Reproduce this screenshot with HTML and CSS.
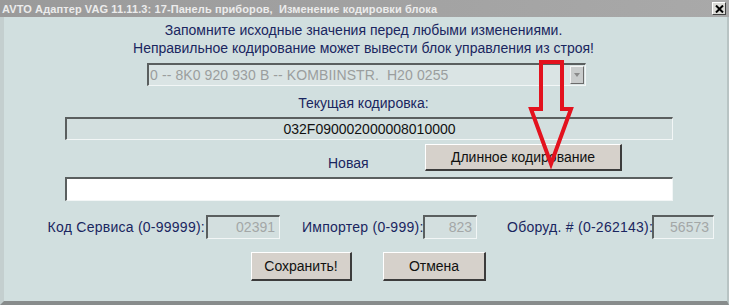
FILE: index.html
```html
<!DOCTYPE html>
<html lang="ru">
<head>
<meta charset="utf-8">
<title>Изменение кодировки блока</title>
<link rel="stylesheet" href="styles.css">
</head>
<body>
<div class="window">
  <div class="titlebar">
    <span class="title">AVTO Адаптер VAG 11.11.3: 17-Панель приборов,&nbsp; Изменение кодировки блока</span>
    <span class="close"><svg width="9" height="8" viewBox="0 0 9 8"><path d="M1 0.5 L8 7.5 M8 0.5 L1 7.5" stroke="#000" stroke-width="2" fill="none"/></svg></span>
  </div>
  <div class="content">
    <div class="msg">Запомните исходные значения перед любыми изменениями.</div>
    <div class="msg">Неправильное кодирование может вывести блок управления из строя!</div>
    <div class="combo">
      <span class="combo-text">0 -- 8K0 920 930 B -- KOMBIINSTR.&nbsp; H20 0255</span>
      <span class="combo-btn"><span class="tri"></span></span>
    </div>
    <div class="caption">Текущая кодировка:</div>
    <div class="field current">032F090002000008010000</div>
    <div class="new-row">
      <span class="new-label">Новая</span>
      <span class="button long">Длинное кодирование</span>
    </div>
    <div class="field new"></div>
    <div class="params">
      <span class="plabel l1">Код Сервиса (0-99999):</span>
      <span class="pinput i1">02391</span>
      <span class="plabel l2">Импортер (0-999):</span>
      <span class="pinput i2">823</span>
      <span class="plabel l3">Оборуд. # (0-262143):</span>
      <span class="pinput i3">56573</span>
    </div>
    <div class="actions">
      <span class="button save">Сохранить!</span>
      <span class="button cancel">Отмена</span>
    </div>
  </div>
  <svg class="arrow" width="729" height="305" viewBox="0 0 729 305">
    <polygon points="541,62 562,62 562,109 571,109 551,164 531,109 541,109" fill="none" stroke="#e3121e" stroke-width="4" stroke-linejoin="miter"/>
  </svg>
</div>
</body>
</html>
```
FILE: styles.css
```css
html, body {
  margin: 0;
  padding: 0;
}
body {
  width: 729px;
  height: 305px;
  overflow: hidden;
  font-family: "Liberation Sans", Arial, sans-serif;
}
.window {
  position: relative;
  width: 729px;
  height: 305px;
  background: #d1dfdf;
  box-sizing: border-box;
  border-left: 4px solid #c4cfcf;
  border-bottom: 4px solid #888c8c;
  border-right: 2px solid #b8c4c4;
}
.titlebar {
  height: 17px;
  margin-left: -4px;
  margin-right: -2px;
  background: linear-gradient(to right, #9a9a9a, #a9a9a9);
  display: flex;
  align-items: center;
  justify-content: space-between;
  padding: 0 3px 0 2px;
}
.title {
  color: #ececec;
  font-weight: bold;
  font-size: 11px;
  letter-spacing: 0.1px;
  white-space: pre;
}
.close {
  width: 14px;
  height: 13px;
  box-sizing: border-box;
  background: #dcdcd8;
  border-top: 1px solid #ffffff;
  border-left: 1px solid #ffffff;
  border-right: 1px solid #404040;
  border-bottom: 1px solid #404040;
  display: flex;
  align-items: center;
  justify-content: center;
}
.content {
  padding-top: 4px;
  color: #1a2660;
  font-size: 14px;
}
.msg {
  text-align: center;
  line-height: 18px;
  margin-left: -4px;
}
.combo {
  margin: 6px 0 0 143px;
  width: 439px;
  height: 23px;
  box-sizing: border-box;
  border-top: 2px solid #5a5f5f;
  border-left: 2px solid #5a5f5f;
  border-bottom: 1px solid #f2f6f6;
  border-right: 1px solid #f2f6f6;
  background: #dae4e4;
  display: flex;
  align-items: center;
  justify-content: space-between;
  padding-right: 1px;
}
.combo-text {
  color: #9a9e9e;
  padding-left: 1px;
  letter-spacing: 0.1px;
  white-space: pre;
}
.combo-btn {
  width: 14px;
  height: 18px;
  box-sizing: border-box;
  background: #c9cccc;
  border-top: 1px solid #f4f4f4;
  border-left: 1px solid #f4f4f4;
  border-right: 1px solid #6b6b6b;
  border-bottom: 1px solid #6b6b6b;
  display: flex;
  align-items: center;
  justify-content: center;
}
.tri {
  width: 0;
  height: 0;
  border-left: 3px solid transparent;
  border-right: 3px solid transparent;
  border-top: 4px solid #8a8a8a;
}
.caption {
  text-align: center;
  line-height: 18px;
  margin-top: 8px;
  margin-left: -4px;
}
.field {
  box-sizing: border-box;
  margin-left: 61px;
  width: 608px;
  border-top: 2px solid #5a5f5f;
  border-left: 2px solid #5a5f5f;
  border-bottom: 1px solid #f2f6f6;
  border-right: 1px solid #f2f6f6;
}
.current {
  margin-top: 5px;
  height: 23px;
  line-height: 20px;
  text-align: center;
  color: #111;
  background: #d3dfdf;
}
.new-row {
  margin-top: 4px;
  height: 27px;
  display: flex;
  align-items: center;
  padding-left: 324px;
}
.new-label {
  width: 97px;
  padding-top: 10px;
}
.button {
  box-sizing: border-box;
  display: flex;
  align-items: center;
  justify-content: center;
  background: #d6d1cb;
  border-top: 1px solid #ffffff;
  border-left: 1px solid #ffffff;
  border-right: 2px solid #3c3c3c;
  border-bottom: 2px solid #3c3c3c;
  color: #111;
  font-size: 14px;
}
.long {
  width: 197px;
  height: 27px;
}
.new {
  margin-top: 6px;
  height: 24px;
  background: #ffffff;
}
.params {
  margin-top: 14px;
  display: flex;
  align-items: center;
  height: 24px;
  padding-left: 43px;
}
.plabel {
  text-align: right;
  white-space: nowrap;
  padding-right: 1px;
  letter-spacing: 0.25px;
}
.l1 { width: 158px; }
.l2 { width: 120px; margin-left: 22px; }
.l3 { width: 144px; margin-left: 30px; }
.pinput {
  box-sizing: border-box;
  height: 24px;
  line-height: 21px;
  text-align: right;
  padding-right: 4px;
  color: #a3a7a7;
  background: #d3dfdf;
  border-top: 2px solid #5a5f5f;
  border-left: 2px solid #5a5f5f;
  border-bottom: 1px solid #f2f6f6;
  border-right: 1px solid #f2f6f6;
}
.i1 { width: 74px; }
.i2 { width: 54px; }
.i3 { width: 62px; }
.actions {
  margin-top: 13px;
  display: flex;
  padding-left: 247px;
  gap: 31px;
}
.save { width: 101px; height: 29px; }
.cancel { width: 103px; height: 29px; }
.arrow {
  position: absolute;
  left: -4px;
  top: 0;
  pointer-events: none;
}
```
